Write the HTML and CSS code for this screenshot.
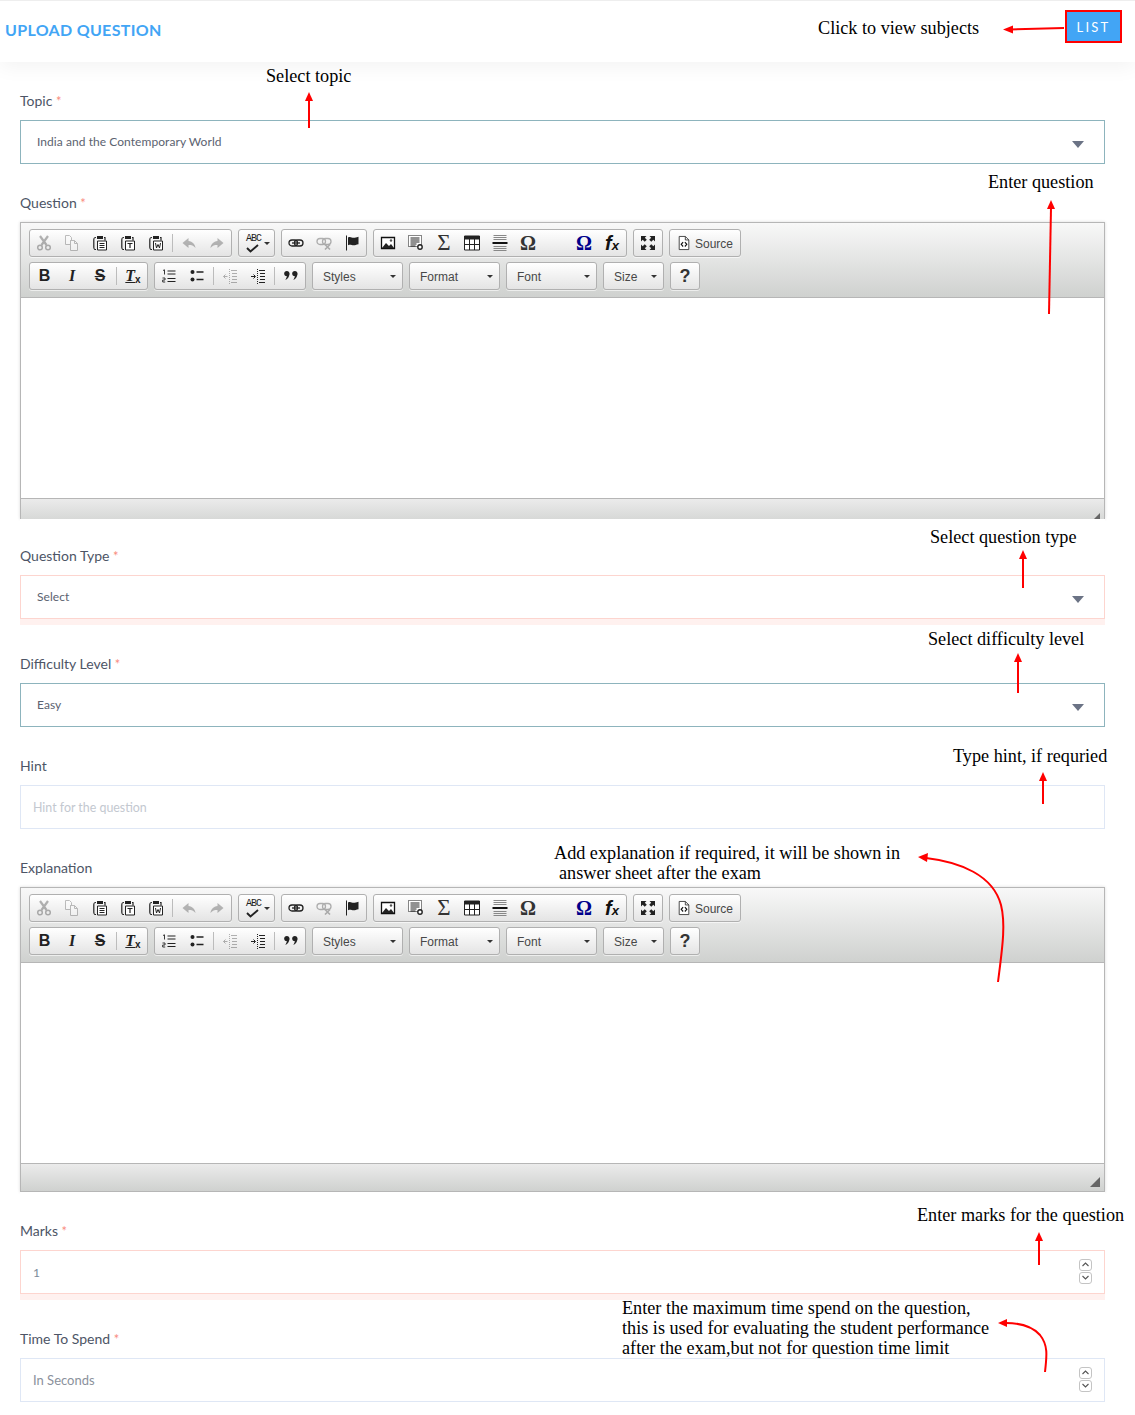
FILE: index.html
```html
<!DOCTYPE html>
<html lang="en">
<head>
  <meta charset="UTF-8">
  <meta name="viewport" content="width=device-width, initial-scale=1.0">
  <title>Upload Question</title>
  <link rel="stylesheet" href="styles.css">
</head>
<body>
  <svg class="sprite" width="0" height="0">
    <symbol id="i-cut" viewBox="0 0 16 16"><path d="M4 1l6.500 9M12 1L5.500 10" fill="none" stroke="#222" stroke-width="2.200"/><circle cx="4" cy="12.500" r="2.300" fill="none" stroke="#222" stroke-width="1.500"/><circle cx="12" cy="12.500" r="2.300" fill="none" stroke="#222" stroke-width="1.500"/></symbol>
    <symbol id="i-copy" viewBox="0 0 16 16"><path d="M1.500 .5h4l2 2v3h-1v4h-5zM6.500 5.500h4l3 3v7h-7z" fill="#fff" stroke="#444"/><path d="M10.500 5.500v3h3" fill="none" stroke="#444"/></symbol>
    <symbol id="i-paste" viewBox="0 0 16 16"><path d="M4 2.500C2 2.500 1.800 3 1.800 5v7c0 2 .2 2.500 2.200 2.500M12 2.500h1v3" fill="none" stroke="#222" stroke-width="1.200"/><path d="M5 1h6v3H5z" fill="#222"/><path d="M5.500 6h9v9h-9z" fill="#fff" stroke="#222"/><path d="M7.500 8.500h5M7.500 10.500h5M7.500 12.500h5" stroke="#222"/></symbol>
    <symbol id="i-paste-t" viewBox="0 0 16 16"><path d="M4 2.500C2 2.500 1.800 3 1.800 5v7c0 2 .2 2.500 2.200 2.500M12 2.500h1v3" fill="none" stroke="#222" stroke-width="1.200"/><path d="M5 1h6v3H5z" fill="#222"/><path d="M5.500 6h9v9h-9z" fill="#fff" stroke="#222"/><path d="M7.500 8.500h5M10 8.500v4.500" stroke="#222" stroke-width="1.200"/></symbol>
    <symbol id="i-paste-w" viewBox="0 0 16 16"><path d="M4 2.500C2 2.500 1.800 3 1.800 5v7c0 2 .2 2.500 2.200 2.500M12 2.500h1v3" fill="none" stroke="#222" stroke-width="1.200"/><path d="M5 1h6v3H5z" fill="#222"/><path d="M5.500 6h9v9h-9z" fill="#fff" stroke="#222"/><path d="M7.500 8l1 5 1.500-3.500 1.500 3.500 1-5" fill="none" stroke="#222"/></symbol>
    <symbol id="i-undo" viewBox="0 0 16 16"><path d="M7.500 3L1.500 8l6 5v-3c3 0 5 .5 7 3-.5-4-3-6.500-7-7z" fill="#333"/></symbol>
    <symbol id="i-redo" viewBox="0 0 16 16"><path d="M8.500 3l6 5-6 5v-3c-3 0-5 .5-7 3 .5-4 3-6.500 7-7z" fill="#333"/></symbol>
    <symbol id="i-check" viewBox="0 0 16 9"><path d="M2 4l3.500 3.500L13 1" fill="none" stroke="#222" stroke-width="1.900"/></symbol>
    <symbol id="i-link" viewBox="0 0 16 16"><rect x="1" y="5" width="8.500" height="6" rx="3" fill="none" stroke="#222" stroke-width="1.300"/><rect x="6.500" y="5" width="8.500" height="6" rx="3" fill="none" stroke="#222" stroke-width="1.300"/><path d="M4 8h8" stroke="#222" stroke-width="1.300"/></symbol>
    <symbol id="i-unlink" viewBox="0 0 16 16"><rect x="1" y="3.500" width="8.500" height="6" rx="3" fill="none" stroke="#222" stroke-width="1.300"/><rect x="6.500" y="3.500" width="8.500" height="6" rx="3" fill="none" stroke="#222" stroke-width="1.300"/><path d="M9 9.500l5 5M14 9.500l-5 5" stroke="#222" stroke-width="1.600"/></symbol>
    <symbol id="i-flag" viewBox="0 0 16 16"><path d="M2.500 .5v15" stroke="#222" stroke-width="1"/><path d="M4 2.500c2.500-1.300 3.500.3 5.500.3s2.500-.4 5-1v7.500c-2.500.5-3 1-5 1S6.500 9 4 10.200z" fill="#222"/></symbol>
    <symbol id="i-image" viewBox="0 0 16 16"><path d="M1.500 2.500h13v11h-13z" fill="#fff" stroke="#111" stroke-width="1.300"/><path d="M2 13l4-5 3 3 2-2 3 4z" fill="#222"/><circle cx="11" cy="5.500" r="1.200" fill="#555"/></symbol>
    <symbol id="i-blocks" viewBox="0 0 16 16"><path d="M.5 .5h13v11h-13z" fill="#fff" stroke="#111" stroke-dasharray="1 1"/><path d="M2.500 3h9M2.500 5h9M2.500 7h9M2.500 9h6M2.500 11h5" stroke="#222"/><circle cx="12" cy="12" r="2.200" fill="#fff" stroke="#222" stroke-width="1.400"/></symbol>
    <symbol id="i-table" viewBox="0 0 16 16"><path d="M.5 1h15v14H.5z" fill="#fff" stroke="#222"/><path d="M.5 1h15v3.500H.5z" fill="#222"/><path d="M5.500 4v11M10.500 4v11M.5 9.500h15" stroke="#222"/></symbol>
    <symbol id="i-hr" viewBox="0 0 16 16"><path d="M1.500 .5h13M1.500 2.500h13M1.500 4.500h13M1.500 11.500h13M1.500 13.500h13M1.500 15.500h13" stroke="#888"/><path d="M.5 8h15" stroke="#111" stroke-width="2"/></symbol>
    <symbol id="i-max" viewBox="0 0 16 16"><path d="M1 1h5.500L4.800 2.700l2 2-2.100 2.100-2-2L1 6.500zM15 1v5.500l-1.700-1.700-2 2-2.100-2.100 2-2L9.500 1zM1 15V9.500l1.700 1.700 2-2 2.100 2.100-2 2L6.500 15zM15 15H9.500l1.700-1.700-2-2 2.100-2.100 2 2L15 9.500z" fill="#222"/></symbol>
    <symbol id="i-source" viewBox="0 0 16 16"><path d="M2.500 .5h7l4 4v11h-11z" fill="#fff" stroke="#333"/><path d="M9.500.5v4h4" fill="none" stroke="#333"/><path d="M7 7L4.800 9.500 7 12M9 7l2.200 2.500L9 12" fill="none" stroke="#111" stroke-width="1.300"/></symbol>
    <symbol id="i-ol" viewBox="0 0 16 16"><path d="M6.500 3h8M6.500 6h8M6.500 10.500h8M6.500 13.500h8" stroke="#222" stroke-width="1.200"/><path d="M2 2.500l1.500-.7V6.500M1.500 10h2.500v2H1.700v2H4.200" fill="none" stroke="#222" stroke-width=".9"/></symbol>
    <symbol id="i-ul" viewBox="0 0 16 16"><circle cx="3.500" cy="4" r="2" fill="#222"/><circle cx="3.500" cy="11.500" r="2" fill="#222"/><path d="M7.500 4h7M7.500 11.500h7" stroke="#222" stroke-width="1.500"/></symbol>
    <symbol id="i-outdent" viewBox="0 0 16 16"><path d="M9 2.500h6M10 5.500h5M10 8.500h5M10 11.500h5M9 14.500h6" stroke="#222"/><path d="M7.500 1v15" stroke="#222" stroke-dasharray="1 1"/><path d="M5.500 8.500h-4M3.500 6.500l-2 2 2 2" fill="none" stroke="#222"/></symbol>
    <symbol id="i-indent" viewBox="0 0 16 16"><path d="M9 2.500h6M10 5.500h5M10 8.500h5M10 11.500h5M9 14.500h6" stroke="#222"/><path d="M7.500 1v15" stroke="#222" stroke-dasharray="1 1"/><path d="M1 8.500h4M3.500 6.500l2 2-2 2" fill="none" stroke="#222"/></symbol>
    <symbol id="i-quote" viewBox="0 0 16 16"><circle cx="3.800" cy="5.500" r="2.600" fill="#222"/><circle cx="11.800" cy="5.500" r="2.600" fill="#222"/><path d="M6.400 5.500c0 3-1.400 5.500-4.100 6.500 1-1.500 1.500-3 1.500-5zM14.400 5.500c0 3-1.400 5.500-4.100 6.500 1-1.500 1.500-3 1.500-5z" fill="#222"/></symbol>
    <symbol id="i-spin" viewBox="0 0 13 25"><rect x=".5" y=".5" width="12" height="11" rx="2.500" fill="#fff" stroke="#c4c4c4"/><rect x=".5" y="13.500" width="12" height="11" rx="2.500" fill="#fff" stroke="#c4c4c4"/><path d="M3.500 7l3-3 3 3M3.500 17l3 3 3-3" fill="none" stroke="#555" stroke-width="1.100"/></symbol>
  </svg>

  <header class="page-head">
    <h1 class="page-title">UPLOAD QUESTION</h1>
    <a class="list-btn" href="#">LIST</a>
  </header>

  <form class="question-form">
    <div class="field">
      <label>Topic <span class="req">*</span></label>
      <div class="select-wrap ok">
        <select><option>India and the Contemporary World</option></select>
      </div>
    </div>

    <div class="field">
      <label>Question <span class="req">*</span></label>
      <div class="editor clipped">
        <div class="toolbar">
          <div class="tool-row">
            <div class="group">
              <span class="tbtn off"><svg><use href="#i-cut"/></svg></span>
              <span class="tbtn off"><svg><use href="#i-copy"/></svg></span>
              <span class="tbtn"><svg><use href="#i-paste"/></svg></span>
              <span class="tbtn"><svg><use href="#i-paste-t"/></svg></span>
              <span class="tbtn"><svg><use href="#i-paste-w"/></svg></span>
              <span class="sep"></span>
              <span class="tbtn off"><svg><use href="#i-undo"/></svg></span>
              <span class="tbtn off"><svg><use href="#i-redo"/></svg></span>
            </div>
            <div class="group">
              <span class="tbtn spell"><span class="abc">ABC</span><svg class="tick"><use href="#i-check"/></svg></span><span class="drop"></span>
            </div>
            <div class="group">
              <span class="tbtn"><svg><use href="#i-link"/></svg></span>
              <span class="tbtn off"><svg><use href="#i-unlink"/></svg></span>
              <span class="tbtn"><svg><use href="#i-flag"/></svg></span>
            </div>
            <div class="group">
              <span class="tbtn"><svg><use href="#i-image"/></svg></span>
              <span class="tbtn"><svg><use href="#i-blocks"/></svg></span>
              <span class="tbtn glyph sigma">Σ</span>
              <span class="tbtn"><svg><use href="#i-table"/></svg></span>
              <span class="tbtn"><svg><use href="#i-hr"/></svg></span>
              <span class="tbtn glyph omega">Ω</span>
              <span class="tbtn"></span>
              <span class="tbtn glyph omega blue">Ω</span>
              <span class="tbtn glyph fx">f<small>x</small></span>
            </div>
            <div class="group">
              <span class="tbtn"><svg><use href="#i-max"/></svg></span>
            </div>
            <div class="group source">
              <svg><use href="#i-source"/></svg>
              <span>Source</span>
            </div>
          </div>
          <div class="tool-row">
            <div class="group">
              <span class="tbtn glyph bold">B</span>
              <span class="tbtn glyph ital">I</span>
              <span class="tbtn glyph strike">S</span>
              <span class="sep"></span>
              <span class="tbtn glyph clear"><u>T</u><small>x</small></span>
            </div>
            <div class="group">
              <span class="tbtn"><svg><use href="#i-ol"/></svg></span>
              <span class="tbtn"><svg><use href="#i-ul"/></svg></span>
              <span class="sep"></span>
              <span class="tbtn off"><svg><use href="#i-outdent"/></svg></span>
              <span class="tbtn"><svg><use href="#i-indent"/></svg></span>
              <span class="sep"></span>
              <span class="tbtn"><svg><use href="#i-quote"/></svg></span>
            </div>
            <div class="group combo">Styles</div>
            <div class="group combo">Format</div>
            <div class="group combo">Font</div>
            <div class="group combo small">Size</div>
            <div class="group">
              <span class="tbtn glyph help">?</span>
            </div>
          </div>
        </div>
        <div class="editor-body"></div>
        <div class="editor-foot"><span class="resizer"></span></div>
      </div>
    </div>

    <div class="field after-clip">
      <label>Question Type <span class="req">*</span></label>
      <div class="select-wrap bad">
        <select><option>Select</option></select>
      </div>
    </div>

    <div class="field">
      <label>Difficulty Level <span class="req">*</span></label>
      <div class="select-wrap ok">
        <select><option>Easy</option></select>
      </div>
    </div>

    <div class="field">
      <label>Hint</label>
      <input class="text-input hint" type="text" placeholder="Hint for the question">
    </div>

    <div class="field">
      <label>Explanation</label>
      <div class="editor">
        <div class="toolbar">
          <div class="tool-row">
            <div class="group">
              <span class="tbtn off"><svg><use href="#i-cut"/></svg></span>
              <span class="tbtn off"><svg><use href="#i-copy"/></svg></span>
              <span class="tbtn"><svg><use href="#i-paste"/></svg></span>
              <span class="tbtn"><svg><use href="#i-paste-t"/></svg></span>
              <span class="tbtn"><svg><use href="#i-paste-w"/></svg></span>
              <span class="sep"></span>
              <span class="tbtn off"><svg><use href="#i-undo"/></svg></span>
              <span class="tbtn off"><svg><use href="#i-redo"/></svg></span>
            </div>
            <div class="group">
              <span class="tbtn spell"><span class="abc">ABC</span><svg class="tick"><use href="#i-check"/></svg></span><span class="drop"></span>
            </div>
            <div class="group">
              <span class="tbtn"><svg><use href="#i-link"/></svg></span>
              <span class="tbtn off"><svg><use href="#i-unlink"/></svg></span>
              <span class="tbtn"><svg><use href="#i-flag"/></svg></span>
            </div>
            <div class="group">
              <span class="tbtn"><svg><use href="#i-image"/></svg></span>
              <span class="tbtn"><svg><use href="#i-blocks"/></svg></span>
              <span class="tbtn glyph sigma">Σ</span>
              <span class="tbtn"><svg><use href="#i-table"/></svg></span>
              <span class="tbtn"><svg><use href="#i-hr"/></svg></span>
              <span class="tbtn glyph omega">Ω</span>
              <span class="tbtn"></span>
              <span class="tbtn glyph omega blue">Ω</span>
              <span class="tbtn glyph fx">f<small>x</small></span>
            </div>
            <div class="group">
              <span class="tbtn"><svg><use href="#i-max"/></svg></span>
            </div>
            <div class="group source">
              <svg><use href="#i-source"/></svg>
              <span>Source</span>
            </div>
          </div>
          <div class="tool-row">
            <div class="group">
              <span class="tbtn glyph bold">B</span>
              <span class="tbtn glyph ital">I</span>
              <span class="tbtn glyph strike">S</span>
              <span class="sep"></span>
              <span class="tbtn glyph clear"><u>T</u><small>x</small></span>
            </div>
            <div class="group">
              <span class="tbtn"><svg><use href="#i-ol"/></svg></span>
              <span class="tbtn"><svg><use href="#i-ul"/></svg></span>
              <span class="sep"></span>
              <span class="tbtn off"><svg><use href="#i-outdent"/></svg></span>
              <span class="tbtn"><svg><use href="#i-indent"/></svg></span>
              <span class="sep"></span>
              <span class="tbtn"><svg><use href="#i-quote"/></svg></span>
            </div>
            <div class="group combo">Styles</div>
            <div class="group combo">Format</div>
            <div class="group combo">Font</div>
            <div class="group combo small">Size</div>
            <div class="group">
              <span class="tbtn glyph help">?</span>
            </div>
          </div>
        </div>
        <div class="editor-body"></div>
        <div class="editor-foot"><span class="resizer"></span></div>
      </div>
    </div>

    <div class="field">
      <label>Marks <span class="req">*</span></label>
      <div class="input-wrap bad">
        <input class="text-input marks" type="number" value="1">
        <svg class="spin"><use href="#i-spin"/></svg>
      </div>
    </div>

    <div class="field">
      <label>Time To Spend <span class="req">*</span></label>
      <div class="input-wrap">
        <input class="text-input" type="number" placeholder="In Seconds">
        <svg class="spin"><use href="#i-spin"/></svg>
      </div>
    </div>
  </form>

  <!-- notes drawn over the screenshot -->
  <div class="notes">
    <p class="note n-list">Click to view subjects</p>
    <p class="note n-topic">Select topic</p>
    <p class="note n-question">Enter question</p>
    <p class="note n-type">Select question type</p>
    <p class="note n-level">Select difficulty level</p>
    <p class="note n-hint">Type hint, if requried</p>
    <p class="note n-expl">Add explanation if required, it will be shown in<br><span class="nudge">answer sheet after the exam</span></p>
    <p class="note n-marks">Enter marks for the question</p>
    <p class="note n-time">Enter the maximum time spend on the question,<br>this is used for evaluating the student performance<br>after the exam,but not for question time limit</p>
    <svg class="arrows" width="1135" height="1415" viewBox="0 0 1135 1415">
      <g fill="none" stroke="#f00" stroke-width="2">
        <path d="M1064 28L1010 29.500"/>
        <path d="M309 128V99"/>
        <path d="M1049 314L1051 208"/>
        <path d="M1023 588V558"/>
        <path d="M1018 693V661"/>
        <path d="M1043 804V780"/>
        <path d="M998 982C1002 950 1006 925 1001 905C993 875 960 862 926 858"/>
        <path d="M1039 1265V1240"/>
        <path d="M1045 1372C1047 1355 1048 1345 1040 1335C1032 1326 1018 1323 1006 1323"/>
      </g>
      <g fill="#f00">
        <path d="M1003 29.500l10-4v8z"/>
        <path d="M309 92l-4 9h8z"/>
        <path d="M1051 200l-4 9h8z"/>
        <path d="M1023 550l-4 9h8z"/>
        <path d="M1018 653l-4 9h8z"/>
        <path d="M1043 772l-4 9h8z"/>
        <path d="M918 857l10-4-1 9z"/>
        <path d="M1039 1232l-4 9h8z"/>
        <path d="M998 1323l9-4v8z"/>
      </g>
    </svg>
  </div>
</body>
</html>
```

FILE: styles.css
```css
* {
  margin: 0;
  padding: 0;
  box-sizing: border-box;
}

body {
  position: relative;
  width: 1135px;
  height: 1415px;
  overflow: hidden;
  background: #fff;
  font-family: Lato, "Open Sans", sans-serif;
  color: #4d5566;
}

.sprite {
  position: absolute;
}

/* header */
.page-head {
  position: relative;
  z-index: 2;
  display: flex;
  justify-content: space-between;
  align-items: flex-start;
  height: 62px;
  padding: 9px 13px 0 5px;
  border-top: 1px solid #eee;
  background: #fff;
  box-shadow: 0 5px 20px rgba(0, 0, 0, 0.05);
}

.page-title {
  font-size: 16px;
  font-weight: 700;
  line-height: 40px;
  color: #42a5f5;
  letter-spacing: 0.32px;
}

.list-btn {
  display: flex;
  align-items: center;
  justify-content: center;
  width: 57px;
  height: 33px;
  border: 2px solid #f00;
  background: #42a5f5;
  color: #fff;
  font-size: 13px;
  letter-spacing: 2.2px;
  text-decoration: none;
}

/* form */
.question-form {
  padding: 0 30px 0 20px;
}

.field {
  position: relative;
  background: #fff;
  padding-top: 29px;
}

.field.after-clip {
  padding-top: 27px;
}

.field label {
  display: block;
  height: 20px;
  margin-bottom: 9px;
  font-size: 14px;
  line-height: 20px;
  color: #4d5566;
}

.req {
  color: #f98b80;
  font-size: 13px;
}

.select-wrap,
.input-wrap {
  position: relative;
}

.select-wrap select {
  display: block;
  width: 100%;
  height: 44px;
  padding-left: 16px;
  padding-bottom: 2px;
  border: 1px solid #dbe4f3;
  border-radius: 0;
  background: #fff;
  appearance: none;
  font: 12px Lato, "Open Sans", sans-serif;
  letter-spacing: 0.06px;
  color: #5b6270;
  outline: none;
}

.select-wrap::after {
  content: "";
  position: absolute;
  top: 21px;
  right: 21px;
  border-left: 6px solid transparent;
  border-right: 6px solid transparent;
  border-top: 7px solid #6b7385;
}

.select-wrap.ok select {
  border-color: #8db4bd;
}

.select-wrap.bad select,
.input-wrap.bad input {
  border-color: #fdd5cf;
}

.select-wrap.bad,
.input-wrap.bad {
  padding-bottom: 6px;
  background: linear-gradient(#fff 44px, #fff1ef 44px);
}

.text-input {
  display: block;
  width: 100%;
  height: 44px;
  padding: 0 13px 0 12px;
  border: 1px solid #dfe7f5;
  background: #fff;
  font: 13px Lato, "Open Sans", sans-serif;
  color: #7b8a9a;
  outline: none;
  appearance: textfield;
}

.text-input.hint {
  font-size: 12.4px;
}

.text-input.marks {
  font-size: 12px;
}

.text-input::placeholder {
  color: #c3c8d0;
  opacity: 1;
}

.text-input[type="number"]::placeholder {
  color: #8b919c;
}

.text-input::-webkit-inner-spin-button {
  display: none;
}

.spin {
  position: absolute;
  top: 9px;
  right: 13px;
  width: 13px;
  height: 25px;
}

/* rich text editor */
.editor {
  border: 1px solid #b6b6b6;
  box-shadow: 0 0 3px rgba(0, 0, 0, 0.15);
}

.editor.clipped {
  height: 297px;
  overflow: hidden;
  border-bottom: 0;
}

.toolbar {
  padding: 6px 8px 7px;
  border-bottom: 1px solid #b6b6b6;
  background: linear-gradient(#f8f8f8, #cfd1cf);
}

.tool-row {
  display: flex;
  gap: 6px;
  height: 28px;
}

.tool-row + .tool-row {
  margin-top: 5px;
}

.group {
  display: flex;
  align-items: center;
  height: 28px;
  border: 1px solid #b0b0b0;
  border-radius: 3px;
  background: linear-gradient(#fff, #e4e4e4);
  box-shadow: 0 1px 0 rgba(255, 255, 255, 0.6);
}

.tbtn {
  position: relative;
  display: flex;
  align-items: center;
  justify-content: center;
  width: 28px;
  height: 26px;
  color: #222;
}

.tbtn svg {
  width: 16px;
  height: 16px;
}

.tbtn.off svg {
  opacity: 0.33;
}

.sep {
  width: 5px;
  height: 18px;
  background: linear-gradient(#bcbcbc, #bcbcbc) center / 1px 100% no-repeat;
}

.abc {
  position: absolute;
  top: 4px;
  left: 7px;
  font: 10px/10px "Liberation Mono", monospace;
  letter-spacing: -1px;
}

.tbtn .tick {
  position: absolute;
  top: 14px;
  left: 6px;
  width: 16px;
  height: 9px;
}

.drop {
  width: 6px;
  height: 3px;
  margin-right: 4px;
  margin-left: -3px;
  margin-top: 1px;
  border-left: 3px solid transparent;
  border-right: 3px solid transparent;
  border-top: 3px solid #333;
}

.glyph {
  font-family: "Liberation Sans", sans-serif;
}

.bold {
  font-size: 16px;
  font-weight: 700;
  padding-left: 1px;
}

.ital {
  font-family: "Liberation Serif", serif;
  font-size: 16px;
  font-weight: 700;
  font-style: italic;
}

.strike {
  font-size: 16px;
  font-weight: 700;
  text-decoration: line-through;
}

.clear {
  font-family: "Liberation Serif", serif;
  font-size: 16px;
  font-weight: 700;
  font-style: italic;
}

.clear small {
  font-family: "Liberation Sans", sans-serif;
  font-size: 10px;
  font-style: normal;
  margin-top: 6px;
}

.sigma {
  font-family: "Liberation Serif", serif;
  font-size: 23px;
  color: #333;
}

.omega {
  font-family: "Liberation Serif", serif;
  font-size: 20px;
  font-weight: 700;
  color: #333;
}

.omega.blue {
  color: #00008b;
}

.fx {
  font-family: "Liberation Sans", sans-serif;
  font-size: 20px;
  font-weight: 700;
  font-style: italic;
  color: #111;
}

.fx small {
  font-size: 13px;
  margin-top: 4px;
}

.help {
  font-size: 18px;
  font-weight: 700;
  color: #333;
}

.source {
  width: 72px;
  padding-left: 7px;
  gap: 4px;
  font: 12px "Liberation Sans", Arial, sans-serif;
  color: #474747;
}

.source span {
  margin-top: 1px;
}

.source svg {
  width: 14px;
  height: 16px;
}

.combo {
  position: relative;
  width: 91px;
  padding: 1px 0 0 10px;
  font: 12px "Liberation Sans", Arial, sans-serif;
  color: #484848;
}

.combo.small {
  width: 61px;
}

.combo::after {
  content: "";
  position: absolute;
  top: 12px;
  right: 6px;
  border-left: 3px solid transparent;
  border-right: 3px solid transparent;
  border-top: 3px solid #333;
}

.editor-body {
  height: 200px;
  background: #fff;
}

.editor-foot {
  position: relative;
  height: 28px;
  border-top: 1px solid #b6b6b6;
  background: linear-gradient(#ebebeb, #cfd1cf);
}

.editor.clipped .editor-foot {
  height: 29px;
}

.resizer {
  position: absolute;
  right: 4px;
  bottom: 4px;
  border-left: 10px solid transparent;
  border-bottom: 10px solid #666;
}

/* notes */
.notes {
  position: absolute;
  z-index: 3;
  top: 0;
  left: 0;
  pointer-events: none;
}

.arrows {
  position: absolute;
  top: 0;
  left: 0;
}

.note {
  position: absolute;
  white-space: nowrap;
  font-family: "Liberation Serif", "Times New Roman", serif;
  font-size: 18.2px;
  line-height: 20px;
  color: #000;
}

.nudge {
  margin-left: 5px;
}

.n-list { left: 818px; top: 18px; }
.n-topic { left: 266px; top: 66px; }
.n-question { left: 988px; top: 172px; }
.n-type { left: 930px; top: 527px; }
.n-level { left: 928px; top: 629px; }
.n-hint { left: 953px; top: 746px; }
.n-expl { left: 554px; top: 843px; }
.n-marks { left: 917px; top: 1205px; }
.n-time { left: 622px; top: 1298px; }
```
